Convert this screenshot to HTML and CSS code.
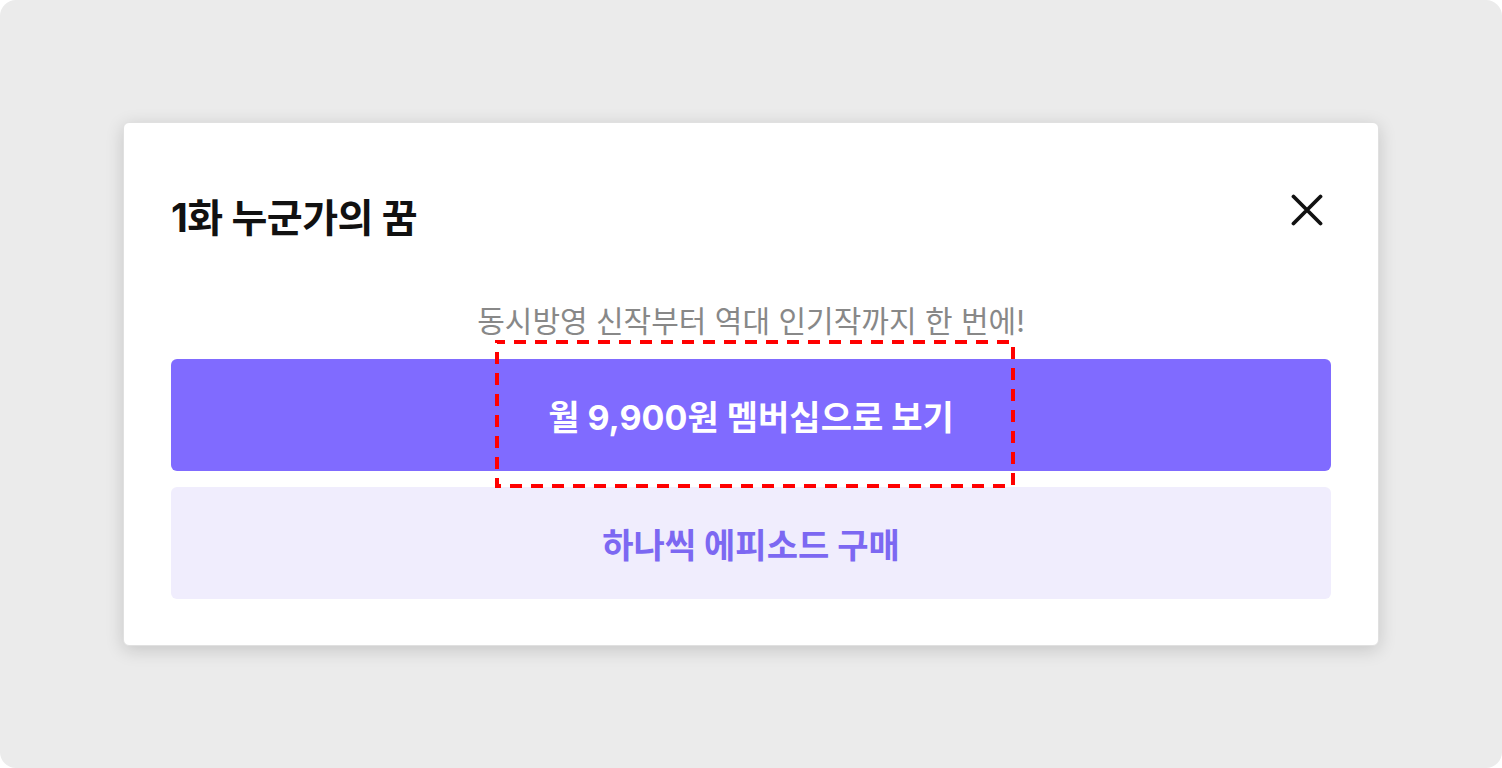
FILE: index.html
```html
<!DOCTYPE html>
<html lang="ko">
<head>
    <meta charset="UTF-8">
    <meta name="viewport" content="width=device-width, initial-scale=1.0">
    <title>구매 안내</title>
    <link rel="stylesheet" href="styles.css">
</head>
<body>
    <div class="screen">
        <div class="modal">
            <!-- Header -->
            <div class="modal-header">
                <h2 class="modal-title">1화 누군가의 꿈</h2>
                <button class="close-btn" aria-label="닫기">
                    <svg width="32" height="32" viewBox="0 0 32 32">
                        <path d="M2.5 2.5 L29.5 29.5 M29.5 2.5 L2.5 29.5" stroke="#111" stroke-width="3.8" stroke-linecap="round" fill="none"/>
                    </svg>
                </button>
            </div>

            <p class="modal-desc">동시방영 신작부터 역대 인기작까지 한 번에!</p>

            <div class="modal-actions">
                <button class="btn btn-primary">월 9,900원 멤버십으로 보기</button>
                <button class="btn btn-secondary">하나씩 에피소드 구매</button>
            </div>

            <!-- Highlight annotation -->
            <svg class="highlight" width="520" height="148" viewBox="0 0 520 148">
                <rect x="2" y="2" width="516" height="144" fill="none" stroke="#ff0000" stroke-width="4" stroke-dasharray="12 9" stroke-dashoffset="4"/>
            </svg>
        </div>
    </div>
</body>
</html>
```

FILE: styles.css
```css
/* General Styling */
body {
    margin: 0;
    padding: 0;
    background-color: #fff;
    font-family: Inter, "Noto Sans CJK KR", sans-serif;
}

.screen {
    width: 1502px;
    height: 768px;
    background-color: #ebebeb;
    border-radius: 16px;
    display: flex;
    align-items: center;
    justify-content: center;
}

/* Modal */
.modal {
    position: relative;
    box-sizing: border-box;
    width: 1256px;
    height: 524px;
    padding: 70px 47px 48px;
    background-color: #fff;
    border: 1px solid #e0e0e0;
    border-radius: 6px;
    box-shadow: 0 4px 18px rgba(0, 0, 0, 0.16);
}

.modal-header {
    display: flex;
    align-items: center;
    justify-content: space-between;
    height: 44px;
}

.modal-title {
    margin: 0;
    font-size: 39px;
    font-weight: 700;
    color: #111;
    letter-spacing: -0.5px;
}

.close-btn {
    padding: 0;
    margin: -11px 8px 0 0;
    border: none;
    background: none;
    cursor: pointer;
    display: flex;
}

.modal-desc {
    margin: 64px 0 18px;
    height: 40px;
    line-height: 40px;
    text-align: center;
    font-size: 30px;
    color: #888;
}

.modal-actions {
    display: flex;
    flex-direction: column;
    gap: 16px;
}

.btn {
    height: 112px;
    border: none;
    border-radius: 6px;
    font-family: inherit;
    font-size: 34px;
    font-weight: 700;
    cursor: pointer;
}

.btn-primary {
    background-color: #806bff;
    color: #fff;
}

.btn-secondary {
    background-color: #f0edfd;
    color: #7c68f2;
}

.highlight {
    position: absolute;
    left: 371px;
    top: 217px;
    pointer-events: none;
}
```
